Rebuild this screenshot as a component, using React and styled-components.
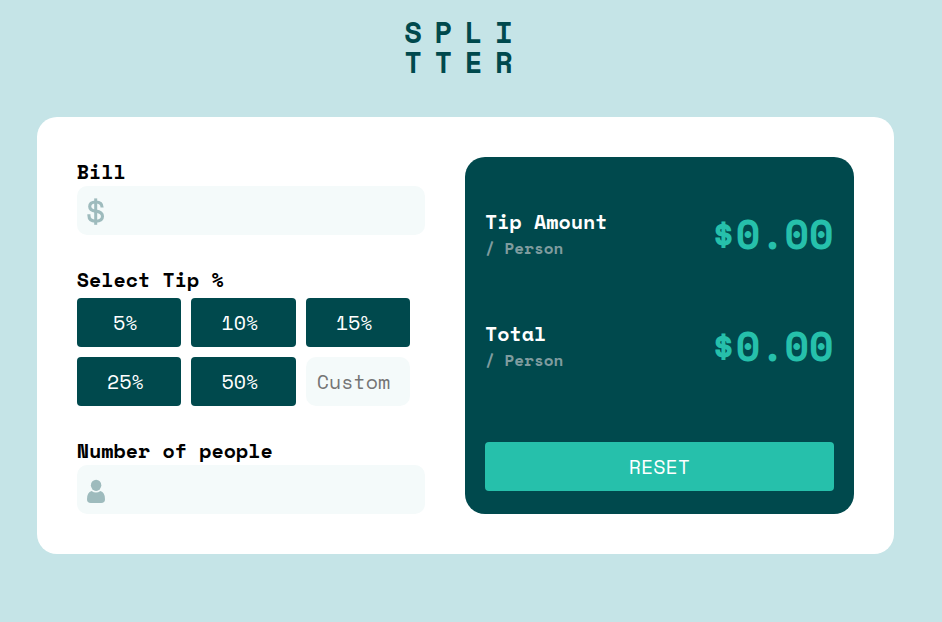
import React, { useState } from "react";
import styled, { createGlobalStyle } from "styled-components";

const GlobalStyle = createGlobalStyle`
  *, *::before, *::after { box-sizing: border-box; }
  body {
    margin: 0;
    background: #c5e4e7;
    font-family: "Space Mono", "DejaVu Sans Mono", "Liberation Mono", monospace;
    font-size: 20px;
  }
  button, input { font: inherit; }
`;

const Page = styled.div`
  width: 930.6px;
  min-height: 622px;
  padding: 17px 37px 0 36.8px;
  display: flex;
  flex-direction: column;
  align-items: center;
`;

const Logo = styled.h1`
  width: 122px;
  height: 60px;
  margin: 0 0 40px;
  color: #00494d;
  font-size: 29px;
  line-height: 30px;
  letter-spacing: 12.5px;
  white-space: nowrap;
`;

const LogoLine = styled.span`
  display: block;
  height: 30px;
`;

const Card = styled.main`
  width: 856.8px;
  height: 437px;
  padding: 40px;
  display: flex;
  gap: 40px;
  border-radius: 20px;
  background: #fff;
`;

const Form = styled.form`
  width: 348.2px;
  display: flex;
  flex-direction: column;
`;

const Field = styled.div`
  display: flex;
  flex-direction: column;
  margin-top: ${({ $top }) => $top || 0}px;
`;

const Label = styled.label`
  height: ${({ $height }) => $height || 29}px;
  line-height: 30px;
  font-weight: 700;
  color: #000;
`;

const InputBox = styled.div`
  height: 49px;
  padding: 2px 10px 0;
  display: flex;
  align-items: center;
  border-radius: 10px;
  background: #f4fafa;
`;

const TextInput = styled.input`
  flex: 1;
  min-width: 0;
  height: 47px;
  padding: 0 10px;
  border: 0;
  outline: 0;
  background: transparent;
  text-align: right;
  color: #00494d;
`;

const Tips = styled.div`
  width: 333.4px;
  display: grid;
  grid-template-columns: repeat(3, 1fr);
  grid-auto-rows: 49px;
  gap: 10px;
`;

const Tip = styled.button`
  padding: 0 7.4px 1px 0;
  border: 0;
  border-radius: 4px;
  background: #00494d;
  color: #fff;
  cursor: pointer;
`;

const CustomTip = styled.input`
  min-width: 0;
  width: 100%;
  padding: 0 0 1px 11px;
  border: 0;
  outline: 0;
  border-radius: 10px;
  background: #f4fafa;
  color: #00494d;
  &::placeholder { color: #757575; opacity: 1; }
`;

const Summary = styled.section`
  width: 388.6px;
  padding: 50px 20px 23px;
  display: flex;
  flex-direction: column;
  border-radius: 20px;
  background: #00494d;
`;

const ResultRow = styled.div`
  height: 112px;
  display: flex;
  justify-content: space-between;
  font-weight: 700;
`;

const ResultName = styled.div`
  color: #fff;
  line-height: 30px;
`;

const PerPerson = styled.div`
  color: #7f9c9f;
  font-size: 16px;
  line-height: 22px;
`;

const Amount = styled.output`
  height: 59px;
  color: #26c0ab;
  font-size: 40px;
  line-height: 53px;
`;

const Reset = styled.button`
  height: 49px;
  margin-top: auto;
  padding: 0 0 1px;
  border: 0;
  border-radius: 4px;
  background: #26c0ab;
  color: #fff;
  cursor: pointer;
`;

function DollarIcon() {
  return (
    <svg width="18" height="28" viewBox="0 0 18 28" fill="none" stroke="#9ebbbd" aria-hidden="true">
      <path strokeWidth="3" d="M8.7.4V26.8" />
      <path strokeWidth="3.1" d="M15.1 9.5C15.1 6 12.7 4 8.7 4S2.7 6 2.7 8.5C2.7 11.4 4.8 12.6 8.7 13.1S15.5 15 15.5 18.3S13 23.2 8.7 23.2S1.9 21.2 1.9 17.2V16.2" />
    </svg>
  );
}

function PersonIcon() {
  return (
    <svg width="18" height="24" viewBox="0 0 18 24" fill="#9ebbbd" aria-hidden="true">
      <ellipse cx="9.1" cy="6.3" rx="5.2" ry="5.6" />
      <path d="M4.6 12Q0 13.2 0 20.2Q0 24 3.8 24H14.2Q18 24 18 20.2Q18 13.2 13.4 12Q9 15.1 4.6 12Z" />
    </svg>
  );
}

export default function App() {
  const [bill, setBill] = useState("");
  const [people, setPeople] = useState("");
  const [custom, setCustom] = useState("");
  const [percent, setPercent] = useState(0);
  const count = Number(people);
  const tip = count > 0 ? (Number(bill) * (Number(custom) || percent)) / 100 / count : 0;
  const total = count > 0 ? Number(bill) / count + tip : 0;
  const reset = () => {
    setBill("");
    setPeople("");
    setCustom("");
    setPercent(0);
  };

  return (
    <>
      <GlobalStyle />
      <Page>
        <Logo>
          <LogoLine>SPLI</LogoLine>
          <LogoLine>TTER</LogoLine>
        </Logo>
        <Card>
          <Form onSubmit={(e) => e.preventDefault()}>
            <Field>
              <Label htmlFor="bill">Bill</Label>
              <InputBox>
                <DollarIcon />
                <TextInput id="bill" value={bill} onChange={(e) => setBill(e.target.value)} />
              </InputBox>
            </Field>
            <Field $top={30}>
              <Label as="div" $height={33}>Select Tip %</Label>
              <Tips>
                {[5, 10, 15, 25, 50].map((n) => (
                  <Tip key={n} type="button" onClick={() => { setPercent(n); setCustom(""); }}>{n}%</Tip>
                ))}
                <CustomTip placeholder="Custom" aria-label="Custom tip" value={custom} onChange={(e) => setCustom(e.target.value)} />
              </Tips>
            </Field>
            <Field $top={30}>
              <Label htmlFor="people">Number of people</Label>
              <InputBox>
                <PersonIcon />
                <TextInput id="people" value={people} onChange={(e) => setPeople(e.target.value)} />
              </InputBox>
            </Field>
          </Form>
          <Summary>
            <ResultRow>
              <ResultName>Tip Amount<PerPerson>/ Person</PerPerson></ResultName>
              <Amount>${tip.toFixed(2)}</Amount>
            </ResultRow>
            <ResultRow>
              <ResultName>Total<PerPerson>/ Person</PerPerson></ResultName>
              <Amount>${total.toFixed(2)}</Amount>
            </ResultRow>
            <Reset type="button" onClick={reset}>RESET</Reset>
          </Summary>
        </Card>
      </Page>
    </>
  );
}
